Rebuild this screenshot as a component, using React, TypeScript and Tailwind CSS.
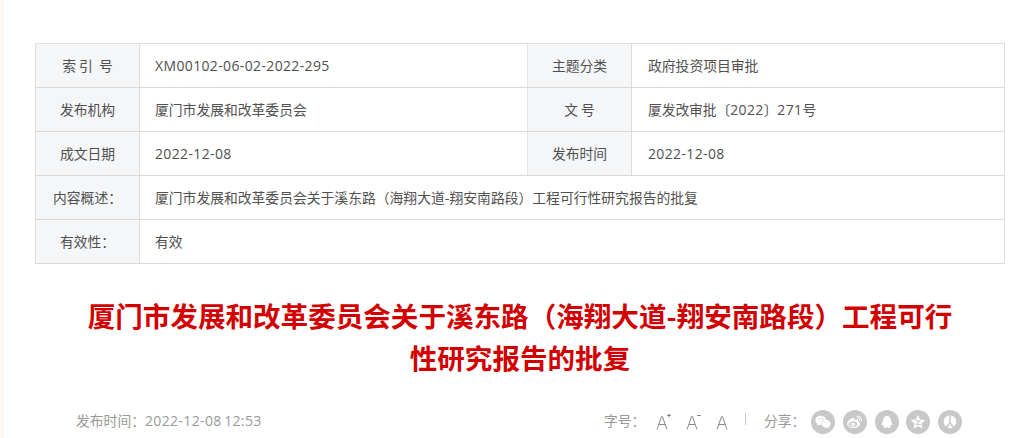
import type { ReactNode } from "react";
import { FaWeibo, FaWeixin } from "react-icons/fa";

interface CellProps {
  children: ReactNode;
}

function Label({ children }: CellProps) {
  return (
    <div className="w-[104px] shrink-0 bg-[#f4f6f8] border-r border-[#dcdcdc] pb-0.5 flex items-center justify-center whitespace-pre">
      {children}
    </div>
  );
}

function Value({ children }: CellProps) {
  return (
    <div className="flex-1 pl-[15px] pb-0.5 flex items-center whitespace-nowrap">
      <span>{children}</span>
    </div>
  );
}

function Row({ children }: CellProps) {
  return <div className="flex h-11 border-b border-[#d9d9d9]">{children}</div>;
}

function RightHalf({ children }: CellProps) {
  return <div className="w-[477px] flex border-l border-[#e4e6e8]">{children}</div>;
}

// Digits and latin letters are set a little wider than the Chinese text
function Num({ children }: CellProps) {
  return (
    <span className="font-['Open_Sans'] text-[14px] leading-none tracking-[0.36px]">
      {children}
    </span>
  );
}

function ShareIcon({ children }: CellProps) {
  return (
    <a className="w-6 h-6 rounded-full bg-[#c8c8c8] text-white flex items-center justify-center">
      {children}
    </a>
  );
}

function LetterA({ sign }: { sign?: "+" | "-" }) {
  return (
    <svg width="18" height="20" viewBox="0 0 18 20" fill="none" stroke="#888888" strokeWidth="1">
      <path d="M1 19.5 5.6 6.5h.8L11 19.5M2.8 14.5h6.4" />
      {sign && <path d="M11 5.5h4" />}
      {sign === "+" && <path d="M13 3.5v4" />}
    </svg>
  );
}

export default function App() {
  return (
    <div
      lang="zh-CN"
      className="h-[438px] overflow-hidden bg-white border-l-4 border-[#fef7f2] pt-[43px] font-['Noto_Sans_CJK_SC',sans-serif] text-[13.8px] leading-5 text-[#505050]"
    >
      {/* Infos du document */}
      <div className="ml-[31px] w-[970px] border border-b-0 border-[#dcdcdc]">
        <Row>
          <Label>索 引  号</Label>
          <Value><Num>XM00102-06-02-2022-295</Num></Value>
          <RightHalf>
            <Label>主题分类</Label>
            <Value><span className="ml-px">政府投资项目审批</span></Value>
          </RightHalf>
        </Row>
        <Row>
          <Label>发布机构</Label>
          <Value>厦门市发展和改革委员会</Value>
          <RightHalf>
            <Label>文 号</Label>
            <Value>
              <span className="ml-px tracking-[-0.1px]">
                厦发改审批〔<Num>2022</Num>〕<Num>271</Num>号
              </span>
            </Value>
          </RightHalf>
        </Row>
        <Row>
          <Label>成文日期</Label>
          <Value><Num>2022-12-08</Num></Value>
          <RightHalf>
            <Label>发布时间</Label>
            <Value><span className="ml-px"><Num>2022-12-08</Num></span></Value>
          </RightHalf>
        </Row>
        <Row>
          <Label>内容概述：</Label>
          <Value>厦门市发展和改革委员会关于溪东路（海翔大道-翔安南路段）工程可行性研究报告的批复</Value>
        </Row>
        <Row>
          <Label>有效性：</Label>
          <Value>有效</Value>
        </Row>
      </div>

      {/* Titre */}
      <h1 className="mt-[30px] ml-[31px] w-[970px] text-center text-[27.57px] leading-[42px] font-bold text-[#d20000] whitespace-nowrap">
        厦门市发展和改革委员会关于溪东路（海翔大道-翔安南路段）工程可行
        <br />
        性研究报告的批复
      </h1>

      <div className="mt-[30px] ml-[72px] flex h-6 items-center text-[#999999] whitespace-nowrap">
        <div className="w-[528px] [word-spacing:-1.5px]">
          发布时间：<Num>2022-12-08 12:53</Num>
        </div>
        <span className="w-[52px] -mt-px">字号：</span>
        <div className="flex gap-3 w-[89px]">
          <LetterA sign="+" />
          <LetterA sign="-" />
          <LetterA />
        </div>
        <span className="w-px h-3 bg-[#cccccc] -mt-0.5" />
        <span className="ml-[18px] w-[47px] -mt-px">分享：</span>
        <div className="flex gap-[7.75px] mt-1">
          <ShareIcon><FaWeixin size={16} /></ShareIcon>
          <ShareIcon><FaWeibo size={15} /></ShareIcon>
          <ShareIcon>
            <svg width="12" height="14" viewBox="0 0 12 14" fill="currentColor">
              <path d="M6 1C3.5 1 2.2 2.8 2.2 5.2L.7 9c-.4 1.4.2 1.7 1.2.6.2.9.6 1.5 1.1 2-.9.6-.6 1.4.7 1.4 1 0 1.7-.3 2.3-.7.6.4 1.3.7 2.3.7 1.3 0 1.6-.8.7-1.4.5-.5.9-1.1 1.1-2 1 1.1 1.6.8 1.2-.6L9.8 5.2C9.8 2.8 8.5 1 6 1Z" />
            </svg>
          </ShareIcon>
          <ShareIcon>
            <svg width="16" height="16" viewBox="0 0 16 16" fill="currentColor">
              <path d="m8 .8 2.1 4.8 5.2.5-3.9 3.5 1.1 5.2L8 12.1l-4.5 2.7 1.1-5.2L.7 6.1l5.2-.5Z" />
              <path d="M5.3 6.9h5L6 10.4h5" fill="none" stroke="#c8c8c8" strokeWidth="1" />
            </svg>
          </ShareIcon>
          <ShareIcon>
            <svg width="16" height="16" viewBox="0 0 16 16" fill="currentColor">
              <path d="M7.3 1.2v5.4c0 2.4-1.2 4.4-3.5 5.8C.3 9 1.2 2.3 7.3 1.2ZM8.7 1.2v5.4c0 2.4 1.2 4.4 3.5 5.8C15.7 9 14.8 2.3 8.7 1.2Z" />
              <path d="M8 9.6c.6 1.7 1.5 3 2.7 3.9-1.7.9-3.7.9-5.4 0C6.5 12.6 7.4 11.3 8 9.6Z" />
            </svg>
          </ShareIcon>
        </div>
      </div>
    </div>
  );
}
